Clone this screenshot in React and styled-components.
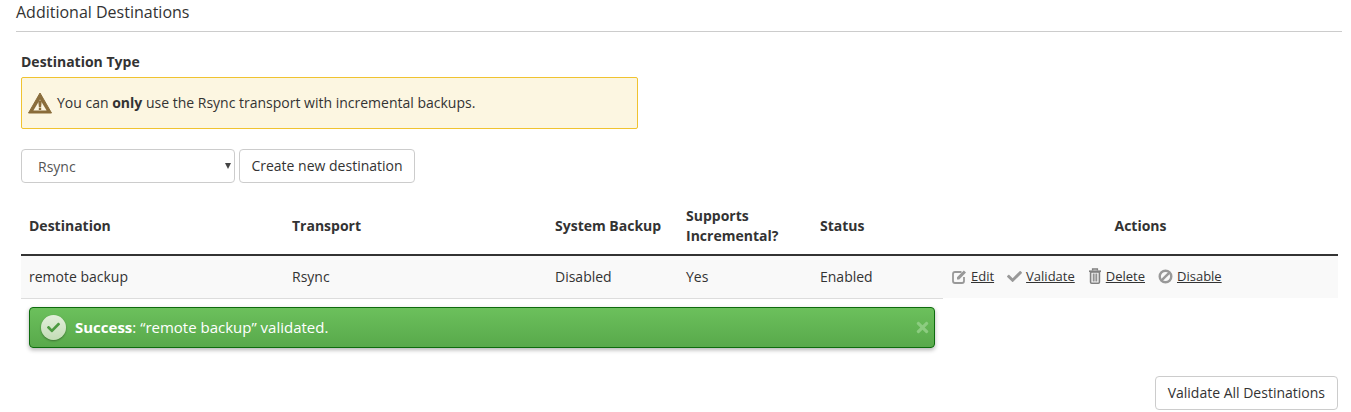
import React from "react";
import styled, { createGlobalStyle } from "styled-components";
import { FaCheck, FaTimes } from "react-icons/fa";

const GlobalStyle = createGlobalStyle`
  html, body {
    margin: 0;
    padding: 0;
    background: #fff;
  }
  body {
    font-family: "Open Sans", "Liberation Sans", sans-serif;
    font-size: 14px;
    line-height: 20px;
    color: #333;
  }
`;

const WarningGlyph = () => (
  <WarningSvg viewBox="0 0 24 22">
    <path d="M12 1 L23.5 21 H0.5 Z" fill="#8a6d3b" stroke="#8a6d3b" strokeWidth="1" strokeLinejoin="round" />
    <path d="M12 7.5 L18.6 18.6 H5.4 Z" fill="#fcf6e1" />
    <path d="M10.2 8.5 H13.8 L13.1 15 H10.9 Z" fill="#8a6d3b" />
    <rect x="10.8" y="15.6" width="2.4" height="2.4" fill="#8a6d3b" />
  </WarningSvg>
);

const EditGlyph = () => (
  <svg viewBox="0 0 15 15">
    <path
      d="M9.5 3 H3 Q1 3 1 5 V12 Q1 14 3 14 H10 Q12 14 12 12 V8"
      fill="none"
      stroke="currentColor"
      strokeWidth="1.8"
    />
    <path d="M5 8.2 L11.8 1.4 L14 3.6 L7.2 10.4 H5 Z" fill="currentColor" />
  </svg>
);

const TrashGlyph = () => (
  <svg viewBox="0 0 14 16">
    <path d="M4.6 2.4 V1 H9.4 V2.4" fill="none" stroke="#808080" strokeWidth="1.4" />
    <rect x="1" y="2.4" width="12" height="1.8" fill="#808080" />
    <rect x="2.6" y="4" width="8.8" height="11.2" rx="1" fill="none" stroke="#808080" strokeWidth="1.6" />
    <path d="M5.3 5.5 V13.5 M7 5.5 V13.5 M8.7 5.5 V13.5" stroke="#808080" strokeWidth="1.1" />
  </svg>
);

const DisableGlyph = () => (
  <svg viewBox="0 0 15 15">
    <circle cx="7.5" cy="7.5" r="5.8" fill="none" stroke="currentColor" strokeWidth="2.4" />
    <path d="M3.6 11.4 L11.4 3.6" stroke="currentColor" strokeWidth="2.4" />
  </svg>
);

const App = () => {
  return (
    <Page>
      <GlobalStyle />
      <Heading>Additional Destinations</Heading>
      <Section>
        <FieldLabel>Destination Type</FieldLabel>
        <WarningBox>
          <WarningGlyph />
          <span>
            You can <strong>only</strong> use the Rsync transport with incremental backups.
          </span>
        </WarningBox>
        <CreateRow>
          <SelectBox>
            <span>Rsync</span>
            <Caret />
          </SelectBox>
          <CreateButton>Create new destination</CreateButton>
        </CreateRow>
        <Table>
          <colgroup>
            <col width="263" />
            <col width="263" />
            <col width="131" />
            <col width="134" />
            <col width="131" />
            <col />
          </colgroup>
          <thead>
            <tr>
              <Th>Destination</Th>
              <Th>Transport</Th>
              <Th>System Backup</Th>
              <Th>Supports Incremental?</Th>
              <Th>Status</Th>
              <Th $center>Actions</Th>
            </tr>
          </thead>
          <tbody>
            <tr>
              <Td>remote backup</Td>
              <Td>Rsync</Td>
              <Td>Disabled</Td>
              <Td>Yes</Td>
              <Td>Enabled</Td>
              <ActionsCell>
                <Action>
                  <EditGlyph />
                  <a href="#edit">Edit</a>
                </Action>
                <Action>
                  <FaCheck />
                  <a href="#validate">Validate</a>
                </Action>
                <Action $iconWidth={14}>
                  <TrashGlyph />
                  <a href="#delete">Delete</a>
                </Action>
                <Action>
                  <DisableGlyph />
                  <a href="#disable">Disable</a>
                </Action>
              </ActionsCell>
            </tr>
            <tr>
              <MessageCell colSpan={5}>
                <SuccessBox>
                  <CheckBadge>
                    <FaCheck />
                  </CheckBadge>
                  <span>
                    <strong>Success</strong>: “remote backup” validated.
                  </span>
                  <CloseIcon />
                </SuccessBox>
              </MessageCell>
              <td />
            </tr>
          </tbody>
        </Table>
        <Footer>
          <Button>Validate All Destinations</Button>
        </Footer>
      </Section>
    </Page>
  );
};

export default App;

const Page = styled.div`
  width: 1351px;
  height: 412px;
  padding: 0 9px 0 16px;
  box-sizing: border-box;
  overflow: hidden;
`;

const Heading = styled.h2`
  margin: 0;
  height: 31px;
  font-size: 16px;
  font-weight: 400;
  line-height: 24px;
  color: #333;
  border-bottom: 1px solid #ccc;
`;

const Section = styled.div`
  padding: 20px 4px 0 5px;
`;

const FieldLabel = styled.div`
  font-size: 14px;
  font-weight: 700;
  line-height: 20px;
  height: 25px;
`;

const WarningBox = styled.div`
  width: 617px;
  height: 52px;
  box-sizing: border-box;
  display: flex;
  align-items: center;
  gap: 5px;
  padding: 0 6px;
  background: #fcf6e1;
  border: 1px solid #f0c330;
  border-radius: 2px;
`;

const WarningSvg = styled.svg`
  width: 24px;
  height: 22px;
  flex: none;
`;

const CreateRow = styled.div`
  display: flex;
  gap: 4px;
  margin-top: 20px;
`;

const SelectBox = styled.div`
  position: relative;
  width: 214px;
  height: 34px;
  box-sizing: border-box;
  display: flex;
  align-items: center;
  padding: 2px 16px 0;
  color: #555;
  border: 1px solid #ccc;
  border-radius: 4px;
`;

const Caret = styled.i`
  position: absolute;
  right: 3px;
  top: 13px;
  border-left: 3px solid transparent;
  border-right: 3px solid transparent;
  border-top: 6px solid #444;
`;

const Button = styled.button`
  height: 34px;
  padding: 0 12px;
  font: inherit;
  color: #333;
  background: #fff;
  border: 1px solid #ccc;
  border-radius: 4px;
`;

const CreateButton = styled(Button)`
  width: 176px;
  padding: 0;
`;

const Table = styled.table`
  width: 1317px;
  margin-top: 15px;
  border-collapse: collapse;
  table-layout: fixed;
`;

const Th = styled.th`
  height: 54px;
  padding: 8px;
  box-sizing: border-box;
  vertical-align: middle;
  line-height: 20px;
  font-weight: 700;
  text-align: ${(p) => (p.$center ? "center" : "left")};
  border-bottom: 2px solid #333;
`;

const Td = styled.td`
  height: 43px;
  padding: 8px;
  box-sizing: border-box;
  background: #f9f9f9;
  border-bottom: 1px solid #ddd;
`;

const ActionsCell = styled(Td)`
  border-bottom: none;
  white-space: nowrap;
`;

const Action = styled.span`
  display: inline-flex;
  align-items: center;
  gap: 4px;
  margin-left: 1px;
  margin-right: 12px;
  color: #999;

  svg {
    width: ${(p) => p.$iconWidth || 15}px;
    height: ${(p) => (p.$iconWidth ? 16 : 15)}px;
    flex: none;
  }

  a {
    color: #333;
    font-size: 13px;
    text-decoration: underline;
  }
`;

const MessageCell = styled.td`
  padding: 8px;
`;

const SuccessBox = styled.div`
  position: relative;
  height: 41px;
  box-sizing: border-box;
  display: flex;
  align-items: center;
  gap: 9px;
  padding: 0 11px;
  font-size: 15px;
  color: #fff;
  background: linear-gradient(#6cc05c, #58a94b);
  border: 1px solid #0e6b0e;
  border-radius: 4px;
  box-shadow: 0 2px 4px rgba(0, 0, 0, 0.3);
`;

const CheckBadge = styled.span`
  width: 25px;
  height: 25px;
  display: flex;
  align-items: center;
  justify-content: center;
  border-radius: 50%;
  color: #4c9a41;
  background: linear-gradient(#e3efdc, #c3dcb6);
  box-shadow: 0 1px 2px rgba(0, 0, 0, 0.35);

  svg {
    width: 13px;
    height: 13px;
  }
`;

const CloseIcon = styled(FaTimes)`
  position: absolute;
  right: 3px;
  top: 11px;
  width: 17px;
  height: 17px;
  color: #8ccc80;
`;

const Footer = styled.div`
  display: flex;
  justify-content: flex-end;
  margin-top: 20px;
`;
